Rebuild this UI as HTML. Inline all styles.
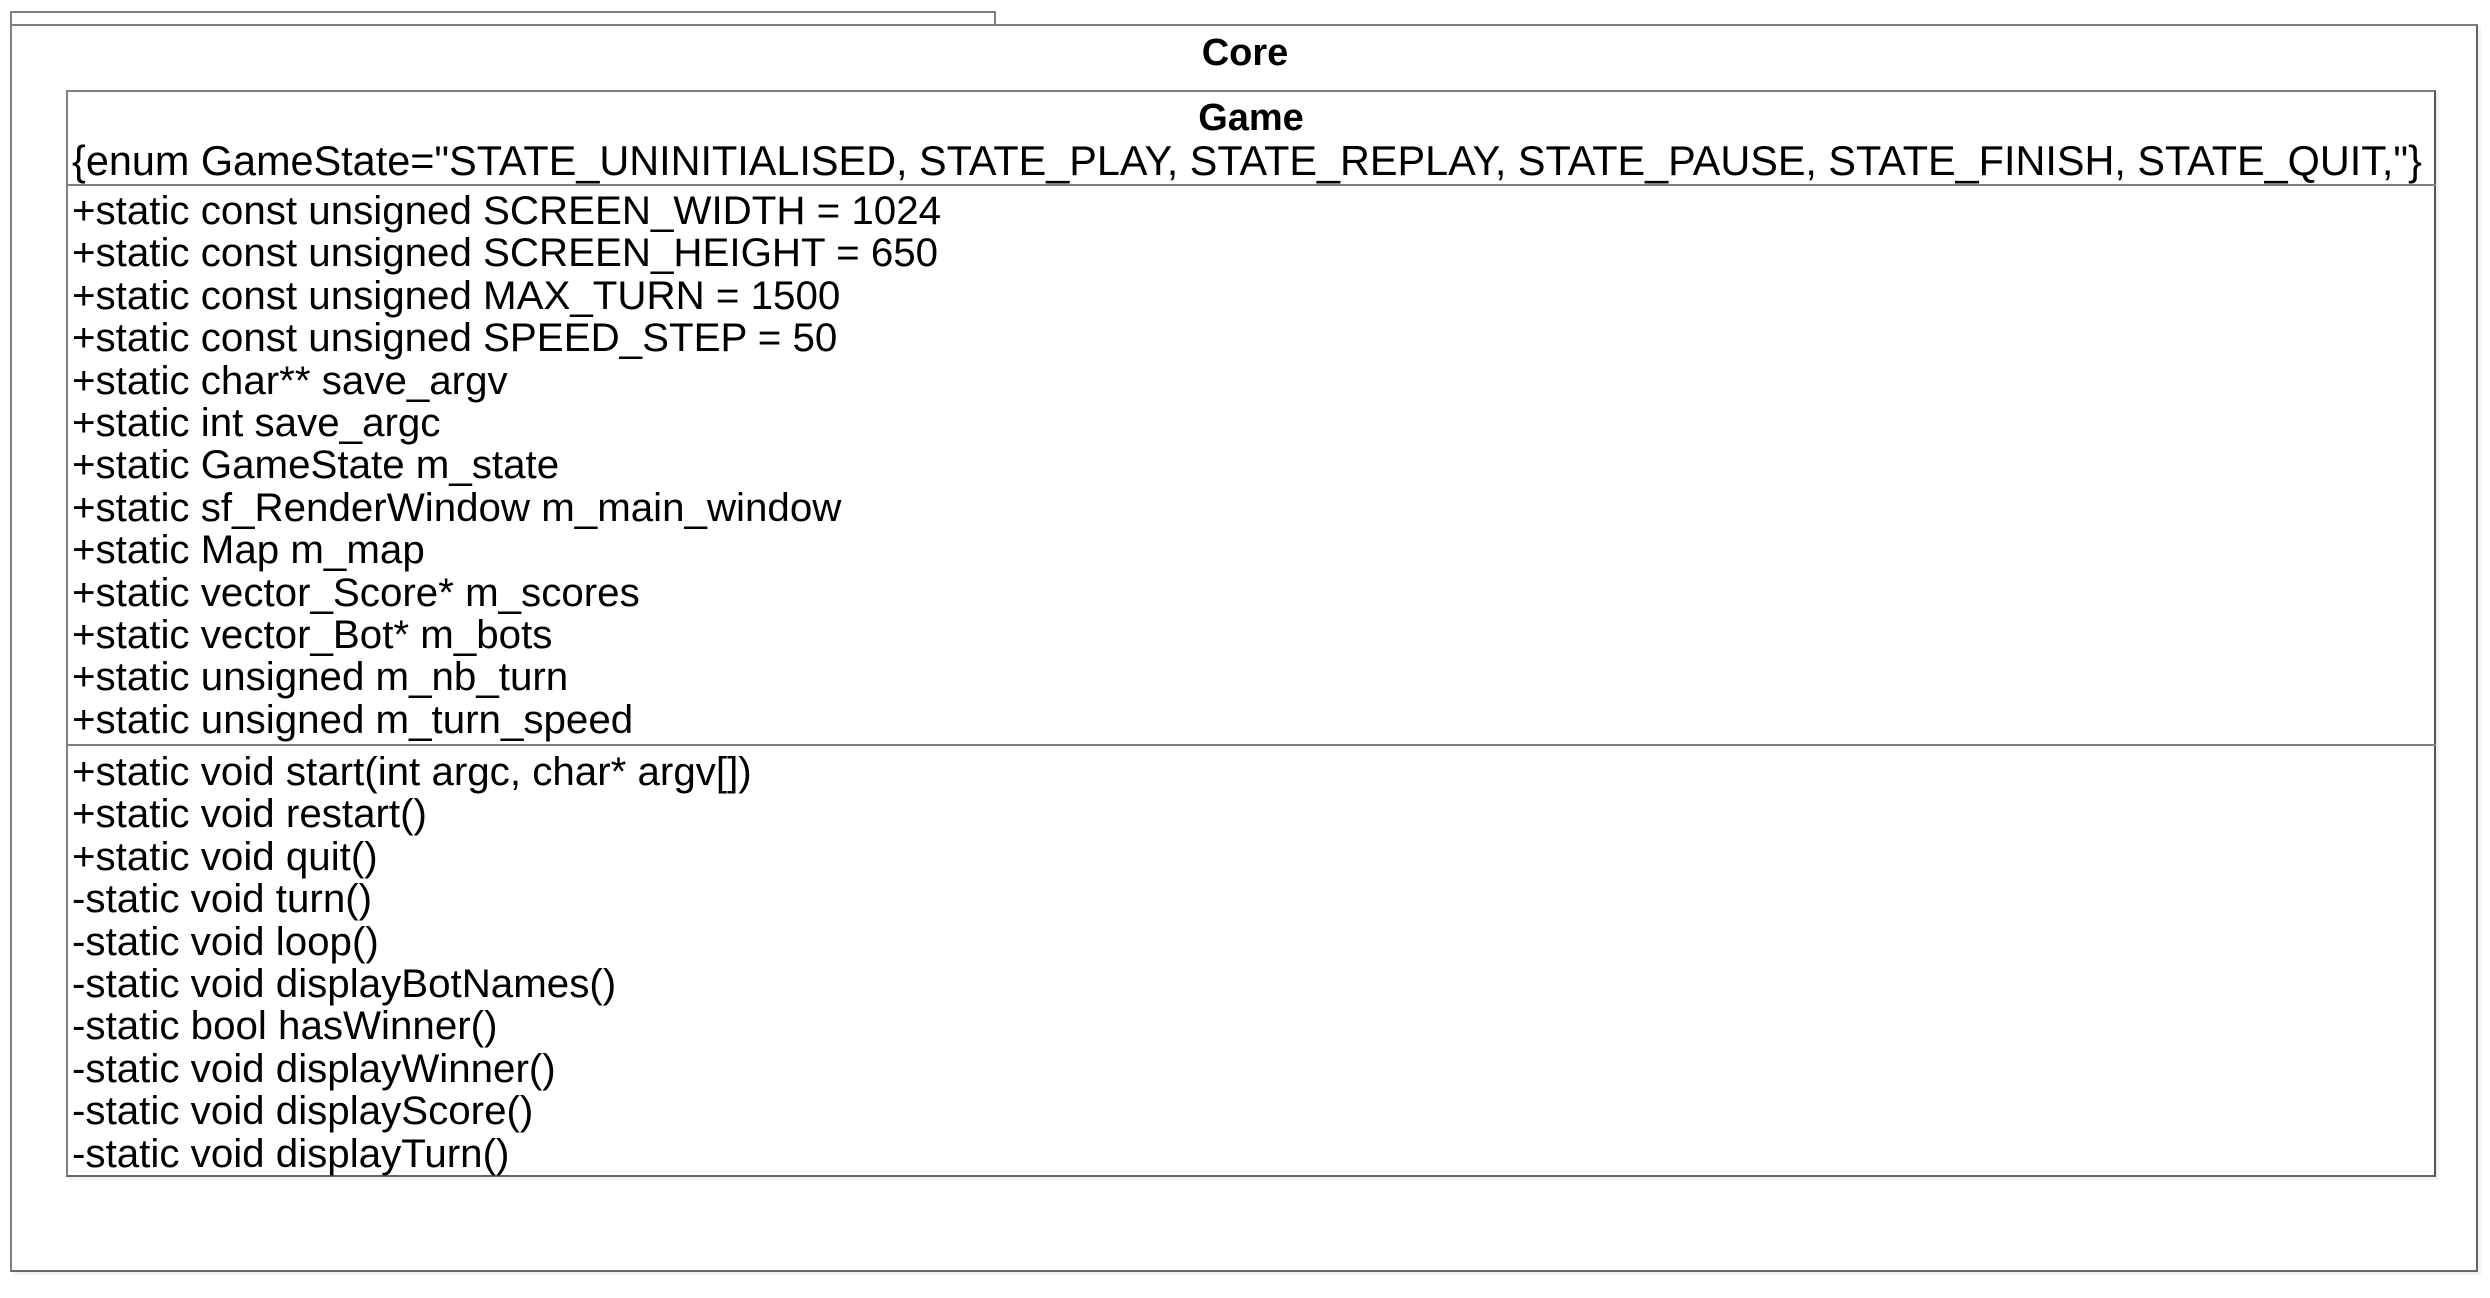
<!DOCTYPE html>
<html><head><meta charset="utf-8"><style>
html,body{margin:0;padding:0;background:#fff;width:2490px;height:1298px;overflow:hidden;font-family:"Liberation Sans",sans-serif;color:#000}
.a{position:absolute;box-sizing:border-box}
.t{position:absolute;white-space:pre;font-size:40.3px;line-height:42.4px;left:72px}
</style></head><body>
<div class="a" style="left:10px;top:11px;width:986px;height:14px;border:2px solid #808080;border-bottom:none"></div>
<div class="a" style="left:13px;top:27px;width:2468px;height:1248px;background:#f2f2f2"></div>
<div class="a" style="left:10px;top:24px;width:2468px;height:1248px;border:2px solid #666;background:#fff;border-top-color:#808080;border-left-color:#808080"></div>
<div class="a" style="left:0;top:30px;width:2490px;text-align:center;font-weight:bold;font-size:38px;line-height:46px">Core</div>
<div class="a" style="left:69px;top:93px;width:2370px;height:1087px;background:#f2f2f2"></div>
<div class="a" style="left:66px;top:90px;width:2370px;height:1087px;border:2px solid #808080;border-right-color:#555;border-bottom-color:#666;background:#fff"></div>
<div class="a" style="left:66px;top:96px;width:2370px;text-align:center;font-weight:bold;font-size:38px;line-height:44px">Game</div>
<div class="t" style="top:140px;font-size:41.4px">{enum GameState="STATE_UNINITIALISED, STATE_PLAY, STATE_REPLAY, STATE_PAUSE, STATE_FINISH, STATE_QUIT,"}</div>
<div class="a" style="left:66px;top:184px;width:2370px;height:2px;background:#808080"></div>
<div class="t" style="top:190px">+static const unsigned SCREEN_WIDTH = 1024
+static const unsigned SCREEN_HEIGHT = 650
+static const unsigned MAX_TURN = 1500
+static const unsigned SPEED_STEP = 50
+static char** save_argv
+static int save_argc
+static GameState m_state
+static sf_RenderWindow m_main_window
+static Map m_map
+static vector_Score* m_scores
+static vector_Bot* m_bots
+static unsigned m_nb_turn
+static unsigned m_turn_speed</div>
<div class="a" style="left:66px;top:744px;width:2370px;height:2px;background:#808080"></div>
<div class="t" style="top:751px">+static void start(int argc, char* argv[])
+static void restart()
+static void quit()
-static void turn()
-static void loop()
-static void displayBotNames()
-static bool hasWinner()
-static void displayWinner()
-static void displayScore()
-static void displayTurn()</div>
</body></html>
